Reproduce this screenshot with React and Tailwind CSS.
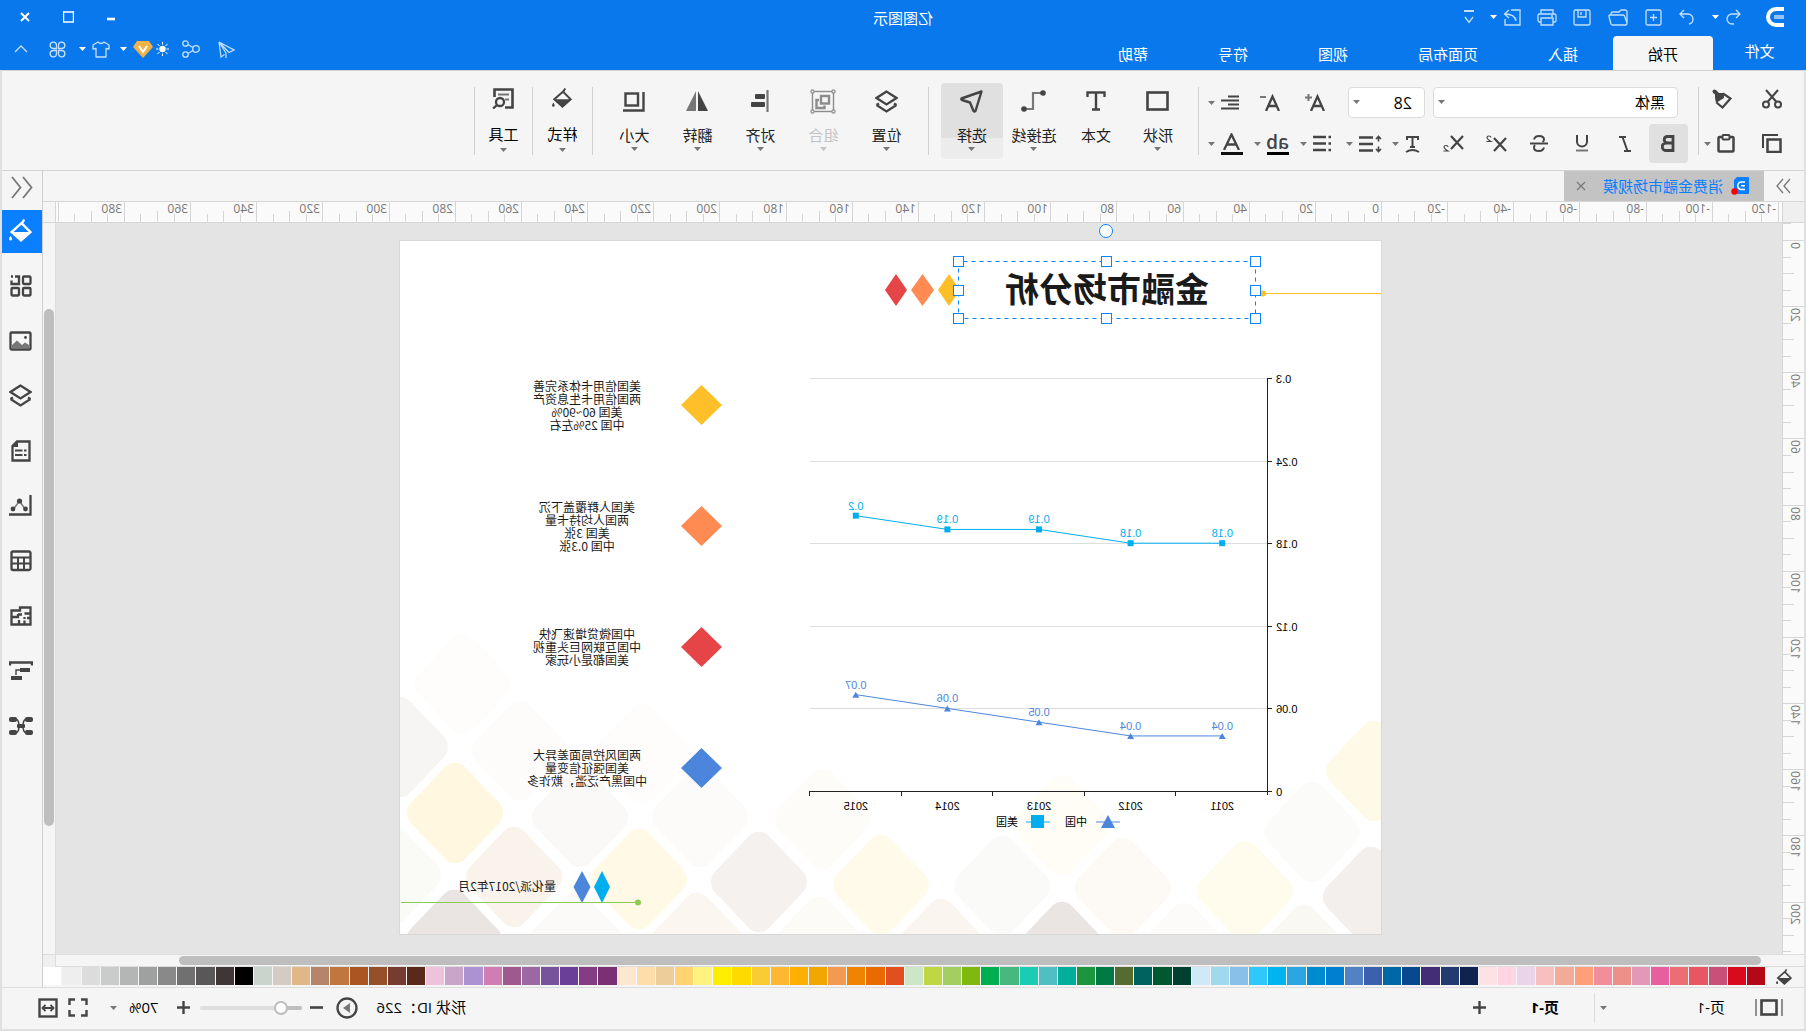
import React, { useState } from 'react';

// ── Small helpers ─────────────────────────────────────────────────────────────
function Svg({ w, h, children, className = '' }) {
  return (
    <svg
      width={w}
      height={h}
      viewBox={`0 0 ${w} ${h}`}
      fill="none"
      stroke="currentColor"
      strokeWidth="2"
      aria-hidden="true"
      className={`shrink-0 ${className}`}
    >
      {children}
    </svg>
  );
}

function Caret({ className = 'text-[#777777]' }) {
  return (
    <Svg w={7} h={4} className={className}>
      <path d="M0 0H7L3.5 4Z" fill="currentColor" stroke="none" />
    </Svg>
  );
}

// ── Icons: title bar ──────────────────────────────────────────────────────────
const Logo = () => (
  <Svg w={18} h={20}>
    <path d="M0 2H8A8 8 0 0 1 8 18H0" strokeWidth="4" />
    <path d="M0 10H10" stroke="#8fc3fa" strokeWidth="4" />
  </Svg>
);
const UndoIcon = () => (
  <Svg w={16} h={16}>
    <path d="M5 1L1 5L5 9M1 5H9A5 5 0 0 1 9 15H7" strokeWidth="1.3" />
  </Svg>
);
const RedoIcon = () => (
  <Svg w={16} h={16}>
    <path d="M11 1L15 5L11 9M15 5H7A5 5 0 0 0 2 10A5 5 0 0 0 6 15" strokeWidth="1.3" />
  </Svg>
);
const NewIcon = () => (
  <Svg w={17} h={17}>
    <rect x="1" y="1" width="15" height="15" rx="1.5" strokeWidth="1.3" />
    <path d="M8.5 5V12M5 8.5H12" strokeWidth="1.3" />
  </Svg>
);
const FolderIcon = () => (
  <Svg w={20} h={17}>
    <path d="M1 14V3Q1 1 3 1H7L9 3H15Q17 3 17 5V6M1 14L3.5 7Q4 6 5 6H18Q19.5 6 19 7.500L17 15Q16.500 16 15.500 16H2.500Q1 16 1 14Z" strokeWidth="1.3" />
  </Svg>
);
const SaveIcon = () => (
  <Svg w={18} h={17}>
    <rect x="1" y="1" width="16" height="15" rx="1.5" strokeWidth="1.3" />
    <path d="M5 1V8H13V1M10 3V6" strokeWidth="1.3" />
  </Svg>
);
const PrinterIcon = () => (
  <Svg w={20} h={17}>
    <path d="M4 5V1H16V5M4 13H2.500Q1 13 1 11.500V6.500Q1 5 2.500 5H17.500Q19 5 19 6.500V11.500Q19 13 17.500 13H16M4 9H16V16H4ZM4 7H6" strokeWidth="1.3" />
  </Svg>
);
const ExportIcon = () => (
  <Svg w={18} h={17}>
    <path d="M10 1H1V16H16V10M5 12Q6 5 16 5M12 1L16.500 5L12 9" strokeWidth="1.3" />
  </Svg>
);
const MoreIcon = () => (
  <Svg w={10} h={14}>
    <path d="M0 1H10" />
    <path d="M1 7L5 12.500L9 7" strokeWidth="1.3" />
  </Svg>
);
const SendIcon = () => (
  <Svg w={17} h={17}>
    <path d="M16 1L1 9L6 11.500M16 1L14 16L10.500 13.500M16 1L6 11.500M16 1L9 12V17" strokeWidth="1.2" />
  </Svg>
);
const ShareIcon = () => (
  <Svg w={18} h={18}>
    <g strokeWidth="1.3">
      <circle cx="4" cy="9" r="3.3" />
      <circle cx="14.500" cy="3.500" r="2.700" />
      <circle cx="14.500" cy="14.500" r="2.700" />
      <path d="M7 7.500L12 4.500M7 10.500L12 13.500" />
    </g>
  </Svg>
);
const SunIcon = () => (
  <Svg w={13} h={14}>
    <circle cx="6.500" cy="7" r="3.200" fill="currentColor" stroke="none" />
    <path d="M6.500 0V2.500M6.500 11.500V14M0 7H2.500M10.500 7H13M1.500 2L3.500 4M9.500 10L11.500 12M11.500 2L9.500 4M3.500 10L1.500 12" strokeWidth="1" />
  </Svg>
);
const VipIcon = () => (
  <Svg w={20} h={17}>
    <path d="M4 0H16L20 6L10 17L0 6Z" fill="#f2b246" stroke="none" />
    <path d="M6 5L10 11L14 5" stroke="#ffffff" />
  </Svg>
);
const ShirtIcon = () => (
  <Svg w={18} h={17}>
    <path d="M6 1Q9 4 12 1L17 4V8L14 7.500V16H4V7.500L1 8V4Z" strokeWidth="1.3" strokeLinejoin="round" />
  </Svg>
);
const AppsIcon = () => (
  <Svg w={17} h={17}>
    <path
      d="M7.500 7.500H4A3.200 3.200 0 1 1 7.500 4ZM9.500 7.500V4A3.200 3.200 0 1 1 13 7.500ZM7.500 9.500V13A3.200 3.200 0 1 1 4 9.500ZM9.500 9.500H13A3.200 3.200 0 1 1 9.500 13Z"
      strokeWidth="1.3"
    />
  </Svg>
);
const ChevronUpIcon = () => (
  <Svg w={14} h={8}>
    <path d="M1 7L7 1L13 7" strokeWidth="1.3" />
  </Svg>
);

// ── Icons: ribbon ─────────────────────────────────────────────────────────────
const CutIcon = () => (
  <Svg w={20} h={20}>
    <circle cx="4" cy="15.500" r="3" />
    <circle cx="16" cy="15.500" r="3" />
    <path d="M5.500 13L16 1M14.500 13L4 1" />
  </Svg>
);
const PainterIcon = () => (
  <Svg w={20} h={20}>
    <path d="M9 4.500L1.500 9.500L9.500 18.500L15.500 13.500" strokeWidth="2.200" />
    <path d="M8 4L13 4L16 1Q18.500 -0.500 19.500 2Q20 3.500 17 5.500V9L16 14L8 9Z" fill="currentColor" stroke="none" />
  </Svg>
);
const CopyIcon = () => (
  <Svg w={20} h={19}>
    <rect x="1.500" y="5.500" width="13" height="12.500" strokeWidth="2.500" />
    <path d="M4 1H19V14" />
  </Svg>
);
const PasteIcon = () => (
  <Svg w={18} h={19}>
    <rect x="1.500" y="3" width="15" height="14.500" rx="1" strokeWidth="2.500" />
    <rect x="5.500" y="1" width="7" height="4.500" rx="1" fill="#f5f5f5" />
  </Svg>
);
const FontUpIcon = () => (
  <Svg w={20} h={17}>
    <path d="M1 17L7.500 2.500L14 17M3.500 12H11.500" strokeWidth="2.300" />
    <path d="M16.500 0V7M13 3.500H20" stroke="#777777" />
  </Svg>
);
const FontDownIcon = () => (
  <Svg w={20} h={17}>
    <path d="M1 17L7.500 2.500L14 17M3.500 12H11.500" strokeWidth="2.300" />
    <path d="M14 3H20" stroke="#777777" />
  </Svg>
);
const AlignTextIcon = () => (
  <Svg w={18} h={15}>
    <path d="M0 1.500H11M0 5.500H18M0 9.500H11M0 13.500H18" />
  </Svg>
);
const BoldIcon = () => (
  <Svg w={14} h={17}>
    <path d="M2 1.500H8A3.300 3.300 0 0 1 8 8H2ZM2 8H9A3.500 3.500 0 0 1 9 15.500H2Z" strokeWidth="2.800" />
  </Svg>
);
const ItalicIcon = () => (
  <Svg w={12} h={16}>
    <path d="M5 1H12M0 15H7M8.500 1L3.500 15" strokeWidth="2" />
  </Svg>
);
const UnderlineIcon = () => (
  <Svg w={14} h={17}>
    <path d="M2 0V6.500A5 5 0 0 0 12 6.500V0" />
    <path d="M1 15.500H13" stroke="#777777" />
  </Svg>
);
const StrikeIcon = () => (
  <Svg w={18} h={17}>
    <path d="M14 4.500Q13 1 9 1Q4 1 4 4.500Q4 6 5.500 7M4 12.500Q5 16 9 16Q14 16 14 12.500Q14 11 13 10" />
    <path d="M0 8.500H18" />
  </Svg>
);
const SuperIcon = () => (
  <Svg w={21} h={17}>
    <path d="M1 3L13 16M13 3L1 16" strokeWidth="2.200" />
    <path d="M16 2.500Q16 1 18 1Q20 1 20 2.500Q20 4 16 6.500H20.500" strokeWidth="1.200" />
  </Svg>
);
const SubIcon = () => (
  <Svg w={21} h={17}>
    <path d="M1 1L13 14M13 1L1 14" strokeWidth="2.200" />
    <path d="M16 12Q16 10.500 18 10.500Q20 10.500 20 12Q20 13.500 16 16H20.500" strokeWidth="1.200" />
  </Svg>
);
const TextCurveIcon = () => (
  <Svg w={15} h={18}>
    <path d="M2 5V2H13V5M7.500 2V12M5 12H10" />
    <path d="M1 17Q7.500 13 14 17" strokeWidth="1.800" />
  </Svg>
);
const LineSpacingIcon = () => (
  <Svg w={23} h={18}>
    <path d="M9 2.500H23M9 9H23M9 15.500H23" strokeWidth="2.300" />
    <path d="M1 4L3.500 1.500L6 4M3.500 1.500V6.500M1 14L3.500 16.500L6 14M3.500 16.500V11.500" strokeWidth="1.600" />
  </Svg>
);
const BulletsIcon = () => (
  <Svg w={18} h={17}>
    <path d="M5 2H18M5 8.500H18M5 15H18M0 2H2.500M0 8.500H2.500M0 15H2.500" strokeWidth="2.300" />
  </Svg>
);

const ShapeIcon = () => (
  <Svg w={23} h={20}>
    <rect x="1.500" y="1.500" width="20" height="17" strokeWidth="2.600" />
  </Svg>
);
const TextIcon = () => (
  <Svg w={20} h={20}>
    <path d="M1.500 6V1.500H18.500V6M10 1.500V18.500M6 18.500H14" strokeWidth="2.400" />
  </Svg>
);
const ConnectorIcon = () => (
  <Svg w={25} h={22}>
    <path d="M3 3H13V19H22" stroke="#777777" strokeWidth="2.200" />
    <circle cx="3" cy="3" r="2.800" fill="currentColor" stroke="none" />
    <circle cx="22" cy="19" r="2.800" fill="currentColor" stroke="none" />
  </Svg>
);
const SelectIcon = () => (
  <Svg w={23} h={23}>
    <path d="M1.500 1.500L21.500 8.500Q22 9.500 21 10L13 12.500L9.500 21Q8.500 22 7.500 21Z" strokeWidth="2.400" strokeLinejoin="round" />
  </Svg>
);
const LayersIcon = () => (
  <Svg w={23} h={23}>
    <path d="M11.500 1.500L21.500 8L11.500 14.500L1.500 8Z" strokeWidth="2.300" />
    <path d="M1.500 15L11.500 21.500L21.500 15M1.500 15L4 13.500M21.500 15L19 13.500" strokeWidth="2.300" />
  </Svg>
);
const GroupIcon = () => (
  <Svg w={26} h={25}>
    <rect x="2.500" y="2.500" width="21" height="20" strokeWidth="1.400" />
    <g fill="#f5f5f5" strokeWidth="1.200">
      <circle cx="2.500" cy="2.500" r="1.600" />
      <circle cx="23.500" cy="2.500" r="1.600" />
      <circle cx="2.500" cy="22.500" r="1.600" />
      <circle cx="23.500" cy="22.500" r="1.600" />
    </g>
    <rect x="7" y="7" width="8" height="7.500" strokeWidth="2.400" />
    <path d="M17 11H19.500V19H11.500V16.500" strokeWidth="2.400" />
  </Svg>
);
const AlignIcon = () => (
  <Svg w={18} h={22}>
    <path d="M1.500 0V22" stroke="#777777" strokeWidth="2.200" />
    <rect x="4" y="4" width="10" height="5" rx="1" fill="currentColor" stroke="none" />
    <rect x="4" y="12" width="14" height="5" rx="1" fill="currentColor" stroke="none" />
  </Svg>
);
const FlipIcon = () => (
  <Svg w={22} h={20}>
    <path d="M10 0V20H0Z" fill="currentColor" stroke="none" />
    <path d="M12 0V20H22Z" fill="#777777" stroke="none" />
  </Svg>
);
const SizeIcon = () => (
  <Svg w={22} h={21}>
    <rect x="7" y="2.500" width="12.500" height="12" strokeWidth="2.400" />
    <path d="M1.500 1V19.500H22" strokeWidth="2.400" />
  </Svg>
);
const ToolIcon = () => (
  <Svg w={22} h={21}>
    <path d="M9 19.500H1.500V1.500H19.500V9" strokeWidth="2.600" />
    <path d="M5 6.500H16M5 11.500H9" stroke="#777777" />
    <circle cx="14" cy="14" r="4" strokeWidth="2.300" />
    <path d="M17 17L21 20.500" strokeWidth="2.300" />
  </Svg>
);
// paint bucket, shared by the ribbon, the side panel and the palette
const BucketIcon = ({ size = 22 }) => (
  <svg width={size} height={size} viewBox="0 0 22 22" fill="none" stroke="currentColor" strokeWidth="2.200" aria-hidden="true" className="shrink-0">
    <path d="M10 4L19.500 12.500L10.500 20.500L1.500 12.500ZM10 5L7.500 0.500" />
    <path d="M2 12.500H19L10.500 21Z" fill="currentColor" stroke="none" />
    <path d="M20.500 16Q22 18 22 19.500A1.600 1.600 0 0 1 19 19.500Q19 18 20.500 16Z" fill="currentColor" stroke="none" />
  </svg>
);

// ── Icons: side panel ─────────────────────────────────────────────────────────
const GridIcon = () => (
  <Svg w={22} h={22}>
    <g strokeWidth="2.300">
      <rect x="1.500" y="1.500" width="7.500" height="7.500" rx="1" />
      <rect x="1.500" y="13" width="7.500" height="7.500" rx="1" />
      <rect x="13" y="13" width="7.500" height="7.500" rx="1" />
      <path d="M17 1.500H13V9H20.500V5.500M19 1.500H21" />
    </g>
  </Svg>
);
const ImageIcon = () => (
  <Svg w={23} h={20}>
    <path d="M3 17V14L7 11.500L10 14L15 9.500L20 14V17Z" fill="#777777" stroke="none" />
    <rect x="1.500" y="1.500" width="20" height="17" rx="1" strokeWidth="2.300" />
    <circle cx="6.500" cy="6.500" r="1.400" fill="currentColor" stroke="none" />
  </Svg>
);
const DocIcon = () => (
  <Svg w={20} h={22}>
    <path d="M1.500 1.500H14L18.500 6V20.500H1.500Z" strokeWidth="2.300" />
    <path d="M13 1V7H19Z" fill="currentColor" stroke="none" />
    <path d="M4.500 10.500H7M8.500 10.500H16M4.500 15H7M8.500 15H16" />
  </Svg>
);
const ChartIcon = () => (
  <Svg w={23} h={21}>
    <path d="M1.500 0V19.500H23" strokeWidth="2.300" />
    <path d="M7 14L12.500 6L18.500 14" stroke="#777777" strokeWidth="1.400" />
    <circle cx="6.500" cy="14" r="2.400" fill="currentColor" stroke="none" />
    <circle cx="12.500" cy="6" r="2.600" fill="currentColor" stroke="none" />
    <circle cx="19" cy="14" r="2.400" fill="currentColor" stroke="none" />
  </Svg>
);
const TableIcon = () => (
  <Svg w={22} h={22}>
    <rect x="1.500" y="1.500" width="19" height="18.500" rx="1.500" strokeWidth="2.300" />
    <path d="M1.500 7.500H20.500M1.500 13.500H20.500M8 7.500V20M14 7.500V20" />
  </Svg>
);
const FloorPlanIcon = () => (
  <Svg w={22} h={20}>
    <path d="M12 5V1.500H1.500V7.500H7.500M20.500 4.500H15M12 1.500V4.500H20.500V18.500H1.500V7M7.500 11V13M7.500 18.500V14.500M1.500 12H5M13 18.500V14M14 8V11H20.500M14 8.500H10" strokeWidth="2.300" />
  </Svg>
);
const TimelineIcon = () => (
  <Svg w={24} h={20}>
    <path d="M1 4.500V1.500H23V4.500" strokeWidth="2.400" />
    <path d="M3 9H13M12 9H17V14" strokeWidth="1.400" />
    <rect x="3" y="7" width="10" height="4" fill="currentColor" stroke="none" />
    <rect x="11" y="15" width="11" height="4" fill="currentColor" stroke="none" />
  </Svg>
);
const MindMapIcon = () => (
  <Svg w={24} h={20}>
    <g fill="currentColor" stroke="none">
      <rect x="0" y="1" width="8" height="5" rx="2" />
      <rect x="0" y="14" width="8" height="5" rx="2" />
      <rect x="16" y="1" width="8" height="5" rx="2" />
      <rect x="16" y="14" width="8" height="5" rx="2" />
      <rect x="8" y="8" width="8" height="4" rx="1" />
    </g>
    <path d="M7 3Q10 4 10 10Q10 16 7 17M17 3Q14 4 14 10Q14 16 17 17" strokeWidth="1.500" />
  </Svg>
);

// ── Title bar + menu ──────────────────────────────────────────────────────────
const MENUS = ['开始', '插入', '页面布局', '视图', '符号', '帮助'];

function IconButton({ label, className = '', children }) {
  return (
    <button type="button" aria-label={label} className={`flex items-center justify-center shrink-0 ${className}`}>
      {children}
    </button>
  );
}

function TitleBar() {
  const [active, setActive] = useState('开始');
  return (
    <header className="bg-[#0a78ed] text-white shrink-0">
      <div className="h-[34px] grid grid-cols-[1fr_auto_1fr] items-center">
        <div className="flex items-center pl-[22px] text-[#c5e0fc]">
          <span className="text-white"><Logo /></span>
          <IconButton label="撤销" className="ml-[25px]"><UndoIcon /></IconButton>
          <IconButton label="撤销列表" className="ml-1.5"><Caret className="text-white" /></IconButton>
          <IconButton label="重做" className="ml-[17px]"><RedoIcon /></IconButton>
          <IconButton label="新建" className="ml-[17px]"><NewIcon /></IconButton>
          <IconButton label="打开" className="ml-[17px]"><FolderIcon /></IconButton>
          <IconButton label="保存" className="ml-[17px]"><SaveIcon /></IconButton>
          <IconButton label="打印" className="ml-4"><PrinterIcon /></IconButton>
          <IconButton label="导出" className="ml-4"><ExportIcon /></IconButton>
          <IconButton label="导出列表" className="ml-1.5"><Caret className="text-white" /></IconButton>
          <IconButton label="更多" className="ml-4"><MoreIcon /></IconButton>
        </div>
        <h1 className="pt-0.5 text-[15px] leading-5">亿图图示</h1>
        <div className="flex items-center justify-end gap-[33px] pr-5">
          <IconButton label="最小化">
            <Svg w={8} h={12}><path d="M0 8H8" strokeWidth="2.600" /></Svg>
          </IconButton>
          <IconButton label="最大化">
            <Svg w={11} h={12}><path d="M0.500 0V11H10.500V0M0 1H11" strokeWidth="1.400" /></Svg>
          </IconButton>
          <IconButton label="关闭">
            <Svg w={10} h={10}><path d="M1 1L9 9M9 1L1 9" /></Svg>
          </IconButton>
        </div>
      </div>

      <div className="h-9 flex">
        <nav className="flex items-end text-[15px]">
          <button type="button" className="w-[93px] h-[38px] text-white">文件</button>
          {MENUS.map(m => (
            <button
              key={m}
              type="button"
              onClick={() => setActive(m)}
              className={`h-[34px] pt-0.5 px-[35px] rounded-t-sm ${m === active ? 'bg-[#f5f5f5] text-black' : 'text-white'}`}
            >
              {m}
            </button>
          ))}
        </nav>
        <div className="ml-auto flex items-center pr-3.5 pb-1.5 text-[#c5e0fc]">
          <IconButton label="发送" className="mr-[18px]"><SendIcon /></IconButton>
          <IconButton label="分享" className="mr-[13px]"><ShareIcon /></IconButton>
          <IconButton label="提示" className="mr-[3px] text-white"><SunIcon /></IconButton>
          <IconButton label="会员" className="mr-1.5"><VipIcon /></IconButton>
          <IconButton label="会员列表" className="mr-2.5"><Caret className="text-white" /></IconButton>
          <IconButton label="皮肤" className="mr-1.5"><ShirtIcon /></IconButton>
          <IconButton label="皮肤列表" className="mr-[13px]"><Caret className="text-white" /></IconButton>
          <IconButton label="应用" className="mr-[21px]"><AppsIcon /></IconButton>
          <IconButton label="收起"><ChevronUpIcon /></IconButton>
        </div>
      </div>
    </header>
  );
}

// ── Ribbon ────────────────────────────────────────────────────────────────────
function Divider({ className = '' }) {
  return <div className={`w-px h-[68px] mt-4 bg-[#cfcfcf] shrink-0 ${className}`} />;
}

function SplitButton({ label, className = 'w-[46px]', children }) {
  return (
    <button type="button" aria-label={label} className={`flex items-center justify-end gap-1.5 shrink-0 ${className}`}>
      {children}
      <Caret />
    </button>
  );
}

function BigButton({ label, icon, className = 'w-[62px]', caret = true, disabled = false, active = false }) {
  return (
    <button
      type="button"
      disabled={disabled}
      className={`h-[76px] mt-3 rounded-sm flex flex-col items-center shrink-0 ${className}
        ${active ? 'bg-linear-to-b from-[#e0e0e0] from-72% to-[#ececec] to-72%' : ''}`}
    >
      <span className={`h-9 flex items-center ${disabled ? 'text-[#8c8c8c]' : 'text-[#444444]'}`}>{icon}</span>
      <span className={`mt-1.5 text-[15px] leading-5 ${disabled ? 'text-[#c4c4c4]' : 'text-[#222222]'}`}>{label}</span>
      {caret && <span className="h-2 flex items-center"><Caret className={disabled ? 'text-[#c4c4c4]' : 'text-[#777777]'} /></span>}
    </button>
  );
}

// collapsed group: icon a little higher, caret a little lower than on a BigButton
function GroupButton({ label, icon, className }) {
  return (
    <button type="button" className={`h-[76px] mt-3 flex flex-col items-center shrink-0 ${className}`}>
      <span className="h-[30px] flex items-center text-[#444444]">{icon}</span>
      <span className="mt-[11px] mb-1 text-[15px] leading-5 text-black">{label}</span>
      <Caret />
    </button>
  );
}

function Ribbon() {
  return (
    <div className="h-[101px] flex border-y border-[#d3d3d3] shrink-0 text-[#444444] overflow-hidden">
      {/* Clipboard */}
      <div className="w-[105px] pt-4 shrink-0">
        <div className="flex h-6">
          <IconButton label="剪切" className="w-16"><CutIcon /></IconButton>
          <IconButton label="格式刷" className="w-9"><PainterIcon /></IconButton>
        </div>
        <div className="flex h-[39px] mt-[13px]">
          <IconButton label="复制" className="w-16"><CopyIcon /></IconButton>
          <SplitButton label="粘贴" className="w-9"><PasteIcon /></SplitButton>
        </div>
      </div>
      <Divider />

      {/* Font */}
      <div className="w-[499px] pt-4 pl-2.5 shrink-0">
        <div className="flex h-[31px] pl-2.5 text-black">
          <label className="relative w-[245px]">
            <span className="sr-only">字体</span>
            <select className="appearance-none w-full h-full pl-3 pr-6 bg-white border border-[#dcdcdc] rounded-sm text-[15px]">
              <option>黑体</option>
              <option>宋体</option>
            </select>
            <span className="absolute right-[5px] top-[13px] pointer-events-none"><Caret /></span>
          </label>
          <label className="relative w-[77px] ml-2">
            <span className="sr-only">字号</span>
            <select className="appearance-none w-full h-full pl-3 pr-5 bg-white border border-[#dcdcdc] rounded-sm text-[16px]">
              <option>28</option>
              <option>32</option>
            </select>
            <span className="absolute right-[5px] top-[13px] pointer-events-none"><Caret /></span>
          </label>
          <div className="flex ml-2.5 text-[#444444]">
            <IconButton label="增大字号" className="w-[45px]"><FontUpIcon /></IconButton>
            <IconButton label="减小字号" className="w-[45px]"><FontDownIcon /></IconButton>
            <SplitButton label="对齐方式" className="w-10"><AlignTextIcon /></SplitButton>
          </div>
        </div>
        <div className="flex h-[39px] mt-1.5">
          <IconButton label="加粗" className="w-[39px] mr-0.5 bg-[#e0e0e0] rounded-sm"><BoldIcon /></IconButton>
          <IconButton label="倾斜" className="w-[43px]"><ItalicIcon /></IconButton>
          <IconButton label="下划线" className="w-[43px]"><UnderlineIcon /></IconButton>
          <IconButton label="删除线" className="w-[43px]"><StrikeIcon /></IconButton>
          <IconButton label="上标" className="w-[43px]"><SuperIcon /></IconButton>
          <IconButton label="下标" className="w-[43px]"><SubIcon /></IconButton>
          <SplitButton label="文字效果" className="w-10"><TextCurveIcon /></SplitButton>
          <SplitButton label="行距"><LineSpacingIcon /></SplitButton>
          <SplitButton label="项目符号"><BulletsIcon /></SplitButton>
          <SplitButton label="文字底色">
            <span className="w-[22px] text-[19px] leading-5 font-semibold border-b-[3px] border-black">ab</span>
          </SplitButton>
          <SplitButton label="文字颜色">
            <span className="w-[22px] flex justify-center pb-0.5 border-b-[3px] border-[#111111]">
              <Svg w={17} h={17}><path d="M1 17L8.500 1.500L16 17M4 11.500H13" strokeWidth="2.300" /></Svg>
            </span>
          </SplitButton>
        </div>
      </div>
      <Divider />

      {/* Tools */}
      <div className="flex pl-[9px] pr-3">
        <BigButton label="形状" icon={<ShapeIcon />} />
        <BigButton label="文本" icon={<TextIcon />} caret={false} />
        <BigButton label="连接线" icon={<ConnectorIcon />} />
        <BigButton label="选择" icon={<SelectIcon />} active />
      </div>
      <Divider />

      {/* Arrange */}
      <div className="flex px-2.5">
        <BigButton label="位置" icon={<LayersIcon />} className="w-[63px]" />
        <BigButton label="组合" icon={<GroupIcon />} className="w-[63px]" disabled />
        <BigButton label="对齐" icon={<AlignIcon />} className="w-[63px]" />
        <BigButton label="翻转" icon={<FlipIcon />} className="w-[63px]" />
        <BigButton label="大小" icon={<SizeIcon />} className="w-[63px]" />
      </div>
      <Divider />
      <GroupButton label="样式" icon={<BucketIcon size={20} />} className="w-[59px]" />
      <Divider />
      <GroupButton label="工具" icon={<ToolIcon />} className="w-[57px]" />
      <Divider />
    </div>
  );
}

// ── Rulers ────────────────────────────────────────────────────────────────────
const RULER_STEP = 16.54; // pixels for 5 units

function ticks(from, to) {
  const list = [];
  for (let v = from; v <= to; v += 5) list.push(v);
  return list;
}

// long tick on every 20, middle one on every 10, short one on every 5
const tickLength = v => (v % 20 === 0 ? 20 : v % 10 === 0 ? 11 : 8);

function TopRuler() {
  return (
    <svg className="flex-1 h-5 bg-[#fafafa]" aria-hidden="true">
      {ticks(-120, 400).map(v => {
        const x = Math.round(400 + (v / 5) * RULER_STEP);
        return (
          <g key={v}>
            <rect x={x} y={20 - tickLength(v)} width="1" height={tickLength(v)} fill="#d6d6d6" />
            {v % 20 === 0 && <text x={x + 3} y="11" fontSize="12" fill="#777777">{v}</text>}
          </g>
        );
      })}
    </svg>
  );
}

function SideRuler() {
  return (
    <svg className="w-[21px] shrink-0 bg-[#fafafa]" aria-hidden="true">
      {ticks(-5, 215).map(v => {
        const y = Math.round(17 + (v / 5) * RULER_STEP);
        const len = v % 20 === 0 ? 21 : tickLength(v);
        return (
          <g key={v}>
            <rect x={21 - len} y={y} width={len} height="1" fill="#d6d6d6" />
            {v % 20 === 0 && (
              <text transform={`translate(13 ${y + 2}) rotate(-90)`} textAnchor="end" fontSize="12" fill="#777777">{v}</text>
            )}
          </g>
        );
      })}
    </svg>
  );
}

// ── Slide ─────────────────────────────────────────────────────────────────────
const TILES = [
  [919, 444, '#fefdfb'], [982, 507, '#f6f5f4'], [862, 511, '#fdfcfa'], [739, 514, '#fefdfb'],
  [927, 573, '#fff7df'], [802, 577, '#fbf9f8'], [682, 577, '#fcfbf9'], [560, 579, '#fdfcf8'],
  [989, 635, '#fafaf7'], [868, 637, '#faf3ec'], [743, 639, '#fff9e6'], [623, 642, '#f4f1ef'],
  [928, 700, '#eae4e2'], [806, 702, '#fbfaf8'], [685, 703, '#fbf6ef'], [563, 707, '#fcfbf8'],
  [501, 645, '#fffaea'], [441, 709, '#fbf5f0'], [380, 646, '#fafaf8'], [320, 585, '#fffdf6'],
  [320, 712, '#eae5e3'], [259, 648, '#fdfaf6'], [137, 651, '#fffbed'], [198, 713, '#fcfbf9'],
  [70, 592, '#fbfbfa'], [78, 715, '#faf8f3'], [8, 531, '#fff9e8'], [11, 657, '#f2efed'],
];

const NOTES = [
  { color: '#ffbf29', lines: ['美国信用卡体系完善', '两国信用卡生息资产', '美国 60~90%', '中国 25%左右'] },
  { color: '#ff8a52', lines: ['美国人群覆盖下沉', '两国人均持卡量', '美国 3张', '中国 0.3张'] },
  { color: '#e64548', lines: ['中国微贷增速飞快', '中国互联网巨头重视', '美国都是小玩家'] },
  { color: '#4c86dc', lines: ['两国风控局面差异大', '美国强征信变量', '中国黑产泛滥，欺诈多'] },
];

const YEARS = ['2011', '2012', '2013', '2014', '2015'];
const CHINA = [0.04, 0.04, 0.05, 0.06, 0.07];
const USA = [0.18, 0.18, 0.19, 0.19, 0.2];
const GRID = [0.3, 0.24, 0.18, 0.12, 0.06, 0];

const AXIS_X = 40;
const AXIS_Y = 423;
const COL_W = 91.6;
const yOf = v => AXIS_Y - (v / 0.3) * 413;
const xOf = i => AXIS_X + COL_W * (i + 0.5);

function Chart() {
  const path = data => data.map((v, i) => `${xOf(i)},${yOf(v)}`).join(' ');
  return (
    <svg width="510" height="480" className="absolute left-[73px] top-[127px] [font-family:'Liberation_Sans','Noto_Sans_CJK_SC',sans-serif]" fontSize="11" role="img" aria-label="中国 美国">
      {GRID.map(v => (
        <g key={v}>
          {v > 0 && <rect x={AXIS_X} y={Math.round(yOf(v))} width="458" height="1" fill="#dddddd" />}
          <rect x={AXIS_X - 4} y={Math.round(yOf(v))} width="4" height="1" fill="#222222" />
          <text x={AXIS_X - 8} y={yOf(v) + 5} textAnchor="end" fill="#000000">{v}</text>
        </g>
      ))}
      <rect x={AXIS_X} y="10" width="1" height="417" fill="#222222" />
      <rect x={AXIS_X} y={AXIS_Y} width="459" height="1" fill="#222222" />
      {YEARS.map((year, i) => (
        <g key={year}>
          <rect x={Math.round(AXIS_X + COL_W * (i + 1))} y={AXIS_Y} width="1" height="5" fill="#222222" />
          <text x={xOf(i)} y={AXIS_Y + 19} textAnchor="middle" fill="#000000">{year}</text>
        </g>
      ))}

      {/* US series */}
      <g fill="#00aeef">
        <polyline points={path(USA)} fill="none" stroke="#00aeef" />
        {USA.map((v, i) => (
          <g key={i}>
            <rect x={xOf(i) - 3} y={yOf(v) - 3} width="6" height="6" />
            <text x={xOf(i)} y={yOf(v) - 6} textAnchor="middle">{v}</text>
          </g>
        ))}
      </g>

      {/* China series */}
      <g fill="#4c86dc">
        <polyline points={path(CHINA)} fill="none" stroke="#4c86dc" />
        {CHINA.map((v, i) => (
          <g key={i}>
            <path d={`M${xOf(i)} ${yOf(v) - 3}l3.500 6h-7z`} />
            <text x={xOf(i)} y={yOf(v) - 6} textAnchor="middle">{v}</text>
          </g>
        ))}
      </g>

      {/* Legend */}
      <path d="M188 454H212" stroke="#4c86dc" />
      <path d="M200 447L207 460H193Z" fill="#4c86dc" />
      <text x="221" y="458">中国</text>
      <path d="M258 454H282" stroke="#00aeef" />
      <rect x="264" y="447" width="13" height="13" fill="#00aeef" />
      <text x="290" y="458">美国</text>
    </svg>
  );
}

function Handle({ className }) {
  return <span className={`absolute w-[11px] h-[11px] bg-white border border-[#0a84ff] ${className}`} />;
}

function Slide() {
  return (
    <div className="absolute left-[400px] top-[17px] w-[983px] h-[695px] bg-white border border-[#d8d8d8] text-[#1a1a1a] [font-family:'Noto_Sans_CJK_SC',sans-serif]">
      {/* Backdrop tiles, lines and small diamonds */}
      <svg className="absolute inset-0 w-full h-full" aria-hidden="true">
        {TILES.map(([x, y, fill]) => (
          <rect key={`${x}-${y}`} x="-38" y="-38" width="76" height="76" rx="14" fill={fill}
                transform={`translate(${x - 1} ${y - 1}) scale(1 1.05) rotate(45)`} />
        ))}
        <path d="M0 52.500H118" stroke="#ffbf29" />
        <circle cx="118" cy="52.500" r="3" fill="#ffbf29" />
        <path d="M432 33l11 16l-11 16l-11-16z" fill="#ffbf29" />
        <path d="M458.500 33l11.500 16l-11.500 16l-11.500-16z" fill="#ff8a52" />
        <path d="M485 33l11 16l-11 16l-11-16z" fill="#e64548" />
        <path d="M779 630l8 16l-8 16l-8-16z" fill="#00aeef" />
        <path d="M799 630l8.500 16l-8.500 16l-8.500-16z" fill="#4c86dc" />
        <path d="M743 661.500H980" stroke="#8bcb53" />
        <circle cx="743" cy="661.500" r="3" fill="#8bcb53" />
      </svg>

      <Chart />

      {/* Selected title */}
      <div className="absolute left-[125px] top-[20px] w-[298px] h-[58px] pb-1 flex items-center justify-center">
        <svg className="absolute inset-0 w-full h-full" aria-hidden="true">
          <rect x="0.500" y="0.500" width="297" height="57" fill="none" stroke="#0a84ff" strokeDasharray="4 4" />
        </svg>
        <h2 className="text-[34px] leading-10 font-bold whitespace-nowrap">金融市场分析</h2>
        <span className="absolute left-1/2 -top-[37px] -ml-1.5 w-3.5 h-3.5 rounded-full bg-white border border-[#0a84ff]" />
        <Handle className="-left-[5px] -top-[5px]" />
        <Handle className="left-1/2 -ml-[5px] -top-[5px]" />
        <Handle className="-right-[5px] -top-[5px]" />
        <Handle className="-left-[5px] top-1/2 -mt-[5px]" />
        <Handle className="-right-[5px] top-1/2 -mt-[5px]" />
        <Handle className="-left-[5px] -bottom-[5px]" />
        <Handle className="left-1/2 -ml-[5px] -bottom-[5px]" />
        <Handle className="-right-[5px] -bottom-[5px]" />
      </div>

      {/* Notes beside their diamonds */}
      <ul className="absolute left-[659px] top-[103px] w-[206px]">
        {NOTES.map(n => (
          <li key={n.color} className="h-[121px] flex items-center">
            <Svg w={41} h={40}>
              <path d="M20.500 0L41 20L20.500 40L0 20Z" fill={n.color} stroke="none" />
            </Svg>
            <p className="flex-1 pl-[23px] text-center text-[12px] leading-[13px] whitespace-nowrap">
              {n.lines.map(line => <span key={line} className="block">{line}</span>)}
            </p>
          </li>
        ))}
      </ul>

      <p className="absolute left-[825px] top-[636px] text-[12px] leading-[17px]">量化派/2017年2月</p>
    </div>
  );
}

// ── Palette ───────────────────────────────────────────────────────────────────
const COLORS = [
  '#b40816', '#d90a1d', '#c95078', '#ea5565', '#ec6d74', '#e85fa0', '#e298b6', '#ee908a', '#f28e9b', '#ff9f7a',
  '#f1ab96', '#f7bfbe', '#ead4e9', '#ffd4e3', '#fee1e4', '#0f234e', '#233a70', '#432d77', '#07488e', '#0068a7',
  '#3b60ae', '#5382c4', '#007fd0', '#008bd0', '#2ba6e3', '#00b4f0', '#30c8fb', '#88c0ea', '#a0d8ef', '#cdeaf6',
  '#004030', '#005831', '#00625f', '#556b2f', '#007a43', '#1d953f', '#00ae9d', '#50bfc3', '#1bccb5', '#47b97f',
  '#00ae52', '#7fb80e', '#a3cf62', '#bfd743', '#cde6c7', '#e24f1e', '#eb6a00', '#f08300', '#f39a52', '#f2a600',
  '#ffaf00', '#fdb833', '#f9cb34', '#ffda00', '#ffee00', '#fff280', '#ffd470', '#edcd98', '#ffddaa', '#fde8cf',
  '#7b3073', '#843c84', '#6a3f98', '#77539b', '#9b68a4', '#9e5a8c', '#cf7db2', '#ad92d2', '#c8a5c9', '#eec2da',
  '#5b291a', '#773b2f', '#954f29', '#ab5523', '#c1763d', '#b68469', '#e0b888', '#d5cbc5', '#cad4cc', '#000000',
  '#3f3737', '#595757', '#717071', '#898989', '#9fa0a0', '#b4b5b5', '#cacccb', '#dcdcdc', '#eeeeee', '#ffffff',
];

function Palette() {
  return (
    <div className="h-5 flex items-start text-[#444444] shrink-0">
      <span className="w-[39px] pt-0.5 flex justify-center"><BucketIcon size={16} /></span>
      <div className="flex-1 flex gap-px h-[18px]">
        {COLORS.map(c => (
          <button key={c} type="button" aria-label={c} className="flex-1" style={{ backgroundColor: c }} />
        ))}
      </div>
    </div>
  );
}

// ── Workspace ─────────────────────────────────────────────────────────────────
function Workspace() {
  return (
    <div className="flex-1 min-w-0 flex flex-col">
      {/* Document tabs */}
      <div className="h-[31px] flex border-b border-[#d6d6d6] shrink-0">
        <button type="button" aria-label="展开" className="w-10 flex items-center justify-center text-[#777777]">
          <Svg w={15} h={16}><path d="M1 1L7 8L1 15M8 1L14 8L8 15" strokeWidth="1.300" /></Svg>
        </button>
        <div className="w-[200px] bg-[#c3c3c3] flex items-center pl-[15px] pr-3 text-[15px] text-[#0a7fff]">
          <Svg w={18} h={18}>
            <path d="M1 0H12L15 3V17H1Q0 17 0 16V1Q0 0 1 0Z" fill="#0a7fff" stroke="none" />
            <path d="M4 5H7.500A3.500 3.500 0 0 1 7.500 12.500H4M4 8.750H8" stroke="#ffffff" strokeWidth="1.600" />
            <circle cx="14.500" cy="14.500" r="3.200" fill="#ff0000" stroke="none" />
          </Svg>
          <a href="#doc" className="ml-2 whitespace-nowrap">消费金融市场规模</a>
          <button type="button" aria-label="关闭文档" className="ml-auto text-[#777777]">
            <Svg w={10} h={10}><path d="M1 1L9 9M9 1L1 9" strokeWidth="1.200" /></Svg>
          </button>
        </div>
      </div>

      {/* Top ruler */}
      <div className="h-[21px] flex border-b border-[#d6d6d6] shrink-0">
        <div className="w-[22px] bg-[#efefef] border-r border-[#d6d6d6]" />
        <TopRuler />
        <div className="w-[13px] border-l border-[#d6d6d6]" />
      </div>

      {/* Canvas */}
      <div className="flex-1 min-h-0 flex">
        <SideRuler />
        <main className="relative flex-1 overflow-hidden bg-[#e4e4e4] border-l border-[#d6d6d6]">
          <Slide />
        </main>
        <div className="w-[13px] pl-px pt-[86px] pb-32 border-l border-[#dddddd]">
          <div className="w-2.5 h-full rounded-full bg-[#bebebe]" />
        </div>
      </div>

      <div className="h-[13px] flex shrink-0">
        <div className="flex-1 border-y border-[#dddddd] pl-[43px] pr-[123px] py-px">
          <div className="h-[9px] rounded-full bg-[#bebebe]" />
        </div>
        <div className="w-[13px] bg-[#efefef] border-l border-t border-[#dddddd]" />
      </div>
      <Palette />
    </div>
  );
}

const PANELS = [
  ['填充', <BucketIcon size={23} />],
  ['符号库', <GridIcon />],
  ['图片', <ImageIcon />],
  ['图层', <LayersIcon />],
  ['页面', <DocIcon />],
  ['图表', <ChartIcon />],
  ['表格', <TableIcon />],
  ['平面图', <FloorPlanIcon />],
  ['时间线', <TimelineIcon />],
  ['导图', <MindMapIcon />],
];

function SidePanel() {
  const [open, setOpen] = useState('填充');
  return (
    <aside className="w-[41px] border-l border-[#cfcfcf] flex flex-col gap-3 shrink-0">
      <button type="button" aria-label="收起面板" className="h-[27px] pt-1.5 flex items-center justify-center text-[#777777]">
        <Svg w={22} h={23}><path d="M10 1L1.500 11.500L10 22M21 1L12.500 11.500L21 22" strokeWidth="1.800" /></Svg>
      </button>
      {PANELS.map(([name, icon]) => (
        <button
          key={name}
          type="button"
          aria-label={name}
          onClick={() => setOpen(name)}
          className={`h-[43px] pb-0.5 pl-0.5 flex items-center justify-center shrink-0 ${name === open ? 'bg-[#0a7fff] text-white' : 'text-[#444444]'}`}
        >
          {icon}
        </button>
      ))}
    </aside>
  );
}

// ── Status bar ────────────────────────────────────────────────────────────────
function StatusBar() {
  const [zoom, setZoom] = useState(16);
  return (
    <footer className="h-[42px] pb-0.5 flex items-center border-t border-[#dddddd] text-[15px] text-black shrink-0">
      <IconButton label="页面视图" className="ml-[21px] text-[#444444]">
        <Svg w={28} h={17}>
          <rect x="6.500" y="1.500" width="15" height="14" strokeWidth="2.600" />
          <path d="M1 0V17M27 0V17" stroke="#777777" strokeWidth="1.600" />
        </Svg>
      </IconButton>
      <label className="relative ml-[30px] w-[131px]">
        <span className="sr-only">页面</span>
        <select className="appearance-none w-full h-[30px] bg-transparent border-r border-[#dddddd]">
          <option>页-1</option>
        </select>
        <span className="absolute right-1.5 top-[13px] pointer-events-none"><Caret /></span>
      </label>
      <button type="button" className="ml-[35px] font-bold">页-1</button>
      <IconButton label="添加页面" className="ml-[45px] text-[#444444]">
        <Svg w={13} h={13}><path d="M6.500 0V13M0 6.500H13" strokeWidth="2.400" /></Svg>
      </IconButton>

      <div className="ml-auto mr-9 flex items-center text-[#444444]">
        <span className="w-[108px] text-black whitespace-nowrap">形状 ID：226</span>
        <IconButton label="放映">
          <Svg w={22} h={22}>
            <circle cx="11" cy="11" r="9.500" strokeWidth="2.300" />
            <path d="M8 6L15 11L8 16Z" fill="#777777" stroke="none" />
          </Svg>
        </IconButton>
        <IconButton label="缩小" className="ml-[13px]">
          <Svg w={13} h={13}><path d="M0 6.500H13" strokeWidth="2.600" /></Svg>
        </IconButton>
        <label className="ml-2 flex">
          <span className="sr-only">缩放</span>
          <input
            type="range"
            min="0"
            max="100"
            value={zoom}
            onChange={e => setZoom(Number(e.target.value))}
            className="appearance-none w-[102px] h-1 rounded-full bg-linear-to-r from-[#bebebe] from-20% to-[#dedede] to-20%
                       [&::-webkit-slider-thumb]:appearance-none [&::-webkit-slider-thumb]:w-3.5 [&::-webkit-slider-thumb]:h-3.5
                       [&::-webkit-slider-thumb]:rounded-full [&::-webkit-slider-thumb]:bg-white
                       [&::-webkit-slider-thumb]:border-2 [&::-webkit-slider-thumb]:border-[#bebebe]"
          />
        </label>
        <IconButton label="放大" className="ml-2.5">
          <Svg w={13} h={13}><path d="M6.500 0V13M0 6.500H13" strokeWidth="2.400" /></Svg>
        </IconButton>
        <SplitButton label="缩放比例" className="w-[67px]">
          <span className="mr-1.5 text-black">70%</span>
        </SplitButton>
        <IconButton label="全屏" className="ml-[22px]">
          <Svg w={20} h={19}><path d="M1.500 7V1.500H7M13 1.500H18.500V7M18.500 12V17.500H13M7 17.500H1.500V12" strokeWidth="2.400" /></Svg>
        </IconButton>
        <IconButton label="适合宽度" className="ml-2.5">
          <Svg w={20} h={20}>
            <rect x="1.500" y="1.500" width="17" height="17" strokeWidth="2.400" />
            <path d="M5 10H15M7.500 7L4.500 10L7.500 13M12.500 7L15.500 10L12.500 13" strokeWidth="1.800" />
          </Svg>
        </IconButton>
      </div>
    </footer>
  );
}

// ── App ───────────────────────────────────────────────────────────────────────
export default function App() {
  return (
    <div className="h-screen flex flex-col overflow-hidden -scale-x-100 bg-[#f5f5f5] [font-family:'Open_Sans','Noto_Sans_CJK_SC',sans-serif]">
      <TitleBar />
      <div className="flex-1 min-h-0 flex flex-col border-x-2 border-b-2 border-[#e0e0e0]">
        <Ribbon />
        <div className="flex-1 min-h-0 flex">
          <Workspace />
          <SidePanel />
        </div>
        <StatusBar />
      </div>
    </div>
  );
}
